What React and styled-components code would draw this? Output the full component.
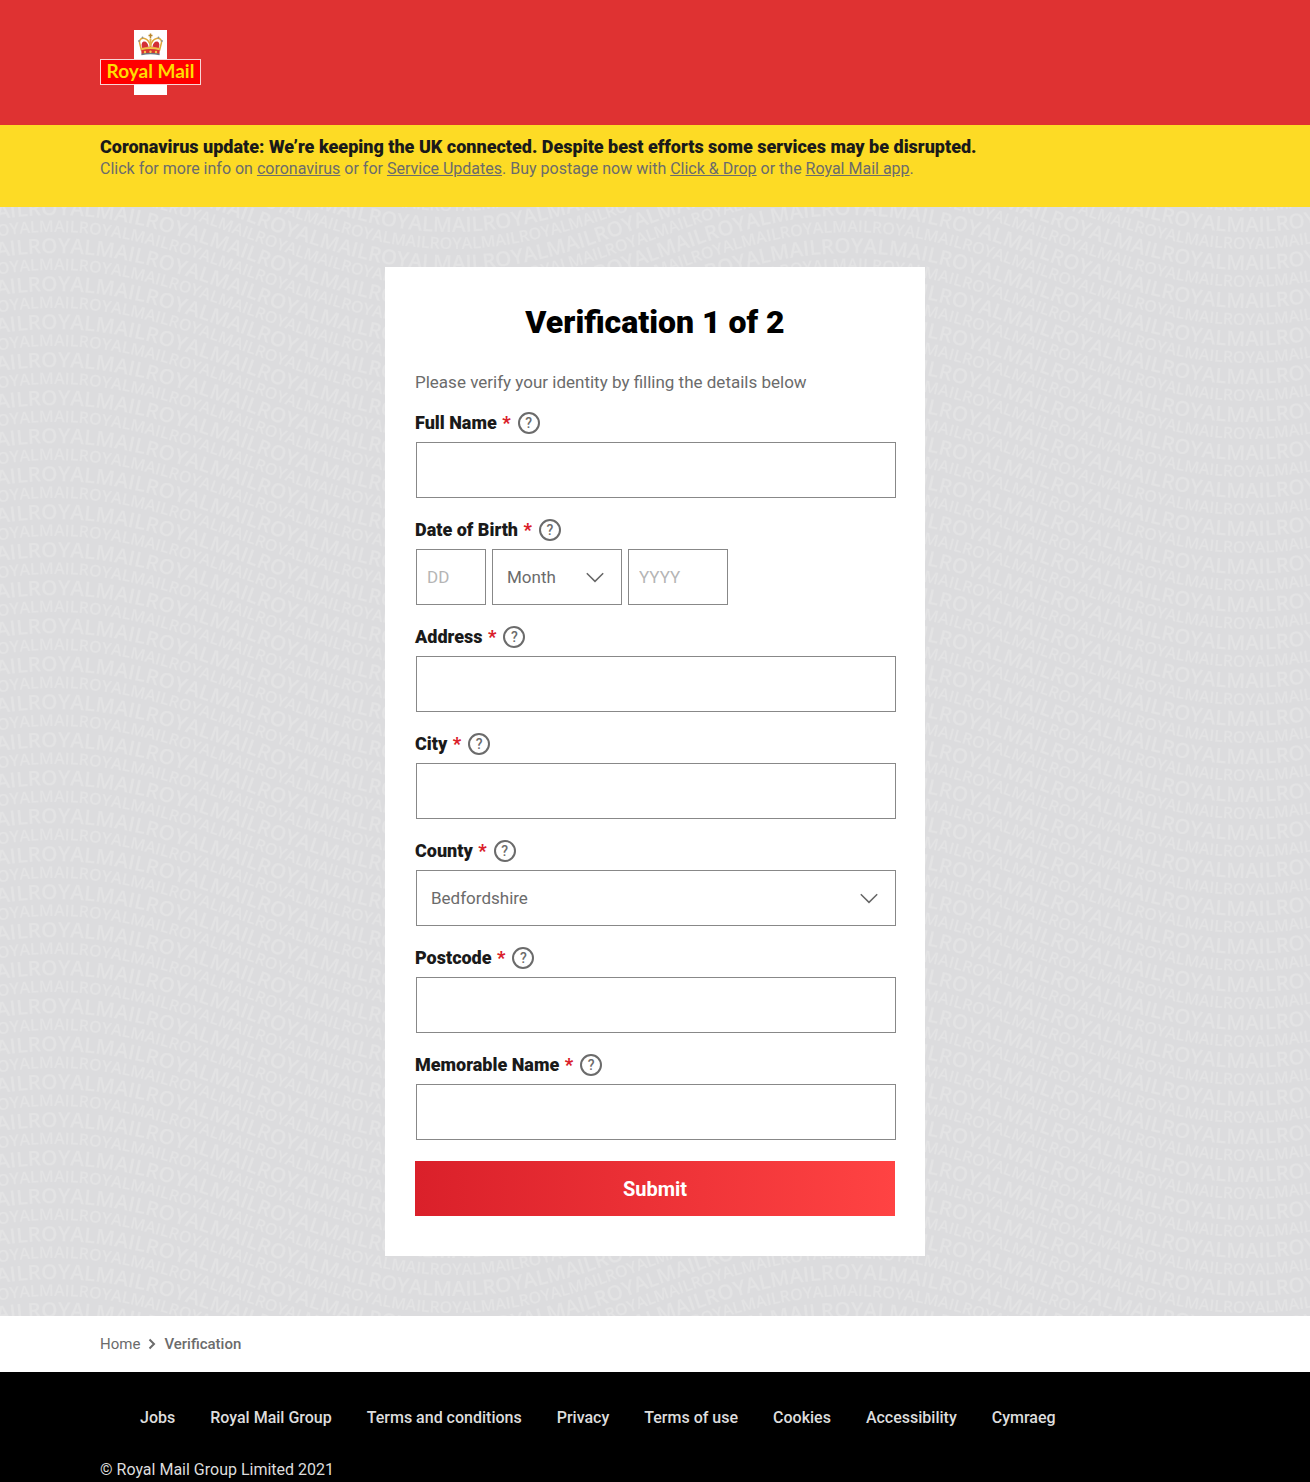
import React from "react";
import styled, { createGlobalStyle, css } from "styled-components";

const FONT = 'Roboto, "Liberation Sans", sans-serif';
const GREY = "#6b6b6b";

const svgUrl = (svg) => `url("data:image/svg+xml,${encodeURIComponent(svg)}")`;

// Wave-shaped lettering that repeats every 38px down the page.
const ROW = 38;
const DROP = 93;
const HALF_WAVE = 398;

const wavePath = () => {
  let d = "M-742 0";
  for (let i = 0; i < 8; i += 1) {
    const from = i % 2 === 0 ? 0 : DROP;
    const to = DROP - from;
    d += `c145 0 253 ${to - from} ${HALF_WAVE} ${to - from}`;
  }
  return d;
};

const lettering = (id, size, offset, y) => {
  const copies = [];
  for (let k = -4; k <= 1; k += 1) {
    copies.push(`<use href="#${id}" y="${y + k * ROW}"/>`);
  }
  return `<defs><text id="${id}" font-size="${size}"><textPath href="#wave" startOffset="${offset}">${"ROYALMAIL".repeat(
    34
  )}</textPath></text></defs>${copies.join("")}`;
};

const waveTile = svgUrl(
  `<svg xmlns="http://www.w3.org/2000/svg" width="2400" height="${ROW}" font-family="Open Sans, Noto Sans, sans-serif" font-weight="600" fill="#e3e3e4"><defs><path id="wave" d="${wavePath()}"/></defs>${lettering(
    "large",
    20.7,
    94,
    8
  )}${lettering("small", 16.1, 27, 25)}</svg>`
);

const chevronDown = svgUrl(
  '<svg xmlns="http://www.w3.org/2000/svg" width="18" height="11" fill="none" stroke="#666" stroke-width="1.5"><path d="M.8 1.2 9 9.4l8.200-8.200"/></svg>'
);

const GlobalStyle = createGlobalStyle`
  *, *::before, *::after { box-sizing: border-box; }
  body { margin: 0; background: #000; font-family: ${FONT}; color: ${GREY}; }
  input, select, button { font-family: inherit; }
`;

const Header = styled.header`
  padding: 30px 100px;
  background: #df3232;
`;

const LogoLink = styled.a`
  display: block;
  width: 101px;
  height: 65px;
`;

const Notice = styled.section`
  padding: 12px 100px 26px;
  background: #fddb25;
`;

const NoticeTitle = styled.h2`
  margin: 0;
  font-size: 18px;
  font-weight: 900;
  line-height: 20px;
  color: #1a1a1a;
`;

const NoticeText = styled.p`
  margin: 0;
  font-size: 16px;
  font-weight: 400;
  line-height: 24px;
`;

const NoticeLink = styled.a`
  color: inherit;
  text-decoration: underline;
`;

const Main = styled.main`
  display: flex;
  justify-content: center;
  padding: 60px 20px;
  background: #dcdcde ${waveTile} 0 0 repeat-y;
`;

const Card = styled.form`
  width: 100%;
  max-width: 540px;
  padding: 35px 30px 40px;
  background: #fff;
`;

const Title = styled.h1`
  margin: 0 0 28px;
  text-align: center;
  font-size: 32px;
  font-weight: 900;
  line-height: 40px;
  color: #000;
`;

const Intro = styled.p`
  margin: 0 0 18px;
  font-size: 17px;
  line-height: 24px;
`;

const FieldGroup = styled.div`
  margin-bottom: 21px;
`;

const LabelRow = styled.div`
  display: flex;
  align-items: center;
  gap: 7px;
  height: 22px;
  margin-bottom: 8px;
`;

const Label = styled.label`
  font-size: 18px;
  font-weight: 900;
  line-height: 22px;
  color: #1a1a1a;
`;

const Required = styled.span`
  margin-left: 1px;
  color: #da202a;
`;

const HelpButton = styled.button`
  display: flex;
  align-items: center;
  justify-content: center;
  width: 22px;
  height: 22px;
  padding: 0;
  border: 2px solid ${GREY};
  border-radius: 50%;
  background: none;
  font-size: 14px;
  font-weight: 500;
  line-height: 18px;
  color: ${GREY};
`;

const Controls = styled.div`
  display: flex;
  gap: 6px;
  margin: 0 -1px 0 1px;
`;

const control = css`
  width: ${(p) => p.$width || "100%"};
  height: 56px;
  border: 1px solid #888;
  border-radius: 0;
  background-color: #fff;
  font-size: 17px;
  color: ${GREY};
`;

const Input = styled.input`
  ${control}
  padding: 0 10px;

  &::placeholder { color: #b5b5b5; opacity: 1; }
`;

const Select = styled.select`
  ${control}
  appearance: none;
  padding: 0 14px;
  background-image: ${chevronDown};
  background-repeat: no-repeat;
  background-position: right 17px center;
`;

const Submit = styled.button`
  width: 100%;
  height: 55px;
  border: 0;
  background: linear-gradient(90deg, #da202a, #ff4343);
  font-size: 20px;
  font-weight: 700;
  color: #fff;
`;

const Breadcrumb = styled.nav`
  display: flex;
  align-items: center;
  gap: 8px;
  height: 56px;
  padding: 0 100px;
  background: #fff;
  font-size: 15px;
`;

const Crumb = styled.a`
  color: ${GREY};
  text-decoration: none;
  font-weight: ${(p) => (p.$current ? 500 : 400)};
`;

const Footer = styled.footer`
  padding: 34px 100px 0;
  background: #000;
  color: #ddd;
  font-size: 16px;
  line-height: 24px;
`;

const FooterLinks = styled.ul`
  display: flex;
  flex-wrap: wrap;
  gap: 0 35px;
  margin: 0 0 28px;
  padding: 0 0 0 40px;
  list-style: none;
`;

const FooterLink = styled.a`
  color: inherit;
  font-weight: 500;
  text-decoration: none;
`;

const Copyright = styled.p`
  margin: 0;
`;

const Logo = () => (
  <svg width="101" height="65" viewBox="0 0 101 65" role="img" aria-label="Royal Mail">
    <rect x="34" y="0" width="33" height="65" fill="#fff" />
    <rect x="0.500" y="29.500" width="100" height="25" fill="#f00" stroke="#f8d6d6" />
    <text x="50.500" y="48" textAnchor="middle" fontFamily="Lato, sans-serif" fontSize="19" fontWeight="700" fill="#fd0">
      Royal Mail
    </text>
    <g>
      <path d="M41.500 20 39.500 12.500c-.4-2.700 1.800-4.300 4-3.800 3 .6 5.300 3 6 6.300h2c.7-3.300 3-5.700 6-6.300 2.200-.5 4.400 1.100 4 3.800L59.500 20z" fill="#fff" />
      <path d="M42.500 18.500c-1.500-3-1.200-6 1-7 2.500-.6 4.500 1.500 5 5zM58.500 18.500c1.500-3 1.200-6-1-7-2.500-.6-4.500 1.500-5 5z" fill="#d32f36" />
      <path d="M41.500 20.500 39.500 12.500c-.5-3 2-4.800 5-4 3.200.8 5 3.500 6 7.500 1-4 2.800-6.700 6-7.500 3-.8 5.500 1 5 4l-2 8" fill="none" stroke="#e0a83a" strokeWidth="1.500" />
      <path d="M50.500 9v9" fill="none" stroke="#e0b24a" strokeWidth="2" />
      <path d="M50.500 3.500v5M48.500 5.500h4" stroke="#b9862c" strokeWidth="1.500" />
      <path d="M41 18c5.500-1.600 13.500-1.600 19 0l-.6 6.200c-5.500-1.300-12.300-1.300-17.800 0z" fill="#d9352f" />
      <path d="M41.200 19.200c5.500-1.500 13.100-1.500 18.600 0" fill="none" stroke="#efc34a" strokeWidth="2" />
      <path d="M41.400 24.600c5.700-1.300 12.500-1.300 18.200 0" fill="none" stroke="#6c7680" strokeWidth="1.500" />
      <g fill="#f2c84e">
        <circle cx="45" cy="22" r="1.200" />
        <circle cx="50.500" cy="21.700" r="1.200" />
        <circle cx="56" cy="22" r="1.200" />
      </g>
      <g fill="#8c9096">
        <circle cx="39" cy="11" r="0.900" />
        <circle cx="62" cy="11" r="0.900" />
        <circle cx="42.500" cy="7.500" r="0.900" />
        <circle cx="58.500" cy="7.500" r="0.900" />
      </g>
    </g>
  </svg>
);

const Field = ({ id, label, children }) => (
  <FieldGroup>
    <LabelRow>
      <Label htmlFor={id}>
        {label} <Required>*</Required>
      </Label>
      <HelpButton type="button" aria-label={`Help with ${label}`}>?</HelpButton>
    </LabelRow>
    <Controls>{children || <Input id={id} type="text" />}</Controls>
  </FieldGroup>
);

const footerLinks = [
  "Jobs",
  "Royal Mail Group",
  "Terms and conditions",
  "Privacy",
  "Terms of use",
  "Cookies",
  "Accessibility",
  "Cymraeg",
];

export default function App() {
  return (
    <>
      <GlobalStyle />
      <Header>
        <LogoLink href="#">
          <Logo />
        </LogoLink>
      </Header>
      <Notice>
        <NoticeTitle>
          Coronavirus update: We’re keeping the UK connected. Despite best efforts some services may be disrupted.
        </NoticeTitle>
        <NoticeText>
          Click for more info on <NoticeLink href="#">coronavirus</NoticeLink> or for{" "}
          <NoticeLink href="#">Service Updates</NoticeLink>. Buy postage now with{" "}
          <NoticeLink href="#">Click &amp; Drop</NoticeLink> or the <NoticeLink href="#">Royal Mail app</NoticeLink>.
        </NoticeText>
      </Notice>
      <Main>
        <Card autoComplete="off" onSubmit={(event) => event.preventDefault()}>
          <Title>Verification 1 of 2</Title>
          <Intro>Please verify your identity by filling the details below</Intro>
          <Field id="full-name" label="Full Name" />
          <Field id="birth-day" label="Date of Birth">
            <Input id="birth-day" type="text" placeholder="DD" $width="70px" />
            <Select aria-label="Month" defaultValue="Month" $width="130px">
              <option>Month</option>
            </Select>
            <Input aria-label="Year" type="text" placeholder="YYYY" $width="100px" />
          </Field>
          <Field id="address" label="Address" />
          <Field id="city" label="City" />
          <Field id="county" label="County">
            <Select id="county" defaultValue="Bedfordshire">
              <option>Bedfordshire</option>
            </Select>
          </Field>
          <Field id="postcode" label="Postcode" />
          <Field id="memorable-name" label="Memorable Name" />
          <Submit type="button">Submit</Submit>
        </Card>
      </Main>
      <Breadcrumb aria-label="Breadcrumb">
        <Crumb href="#">Home</Crumb>
        <svg width="8" height="12" viewBox="0 0 8 12" fill="none" stroke={GREY} strokeWidth="2" aria-hidden="true">
          <path d="M1.500 1.500 6 6l-4.500 4.500" />
        </svg>
        <Crumb href="#" $current aria-current="page">Verification</Crumb>
      </Breadcrumb>
      <Footer>
        <FooterLinks>
          {footerLinks.map((text) => (
            <li key={text}>
              <FooterLink href="#">{text}</FooterLink>
            </li>
          ))}
        </FooterLinks>
        <Copyright>© Royal Mail Group Limited 2021</Copyright>
      </Footer>
    </>
  );
}
